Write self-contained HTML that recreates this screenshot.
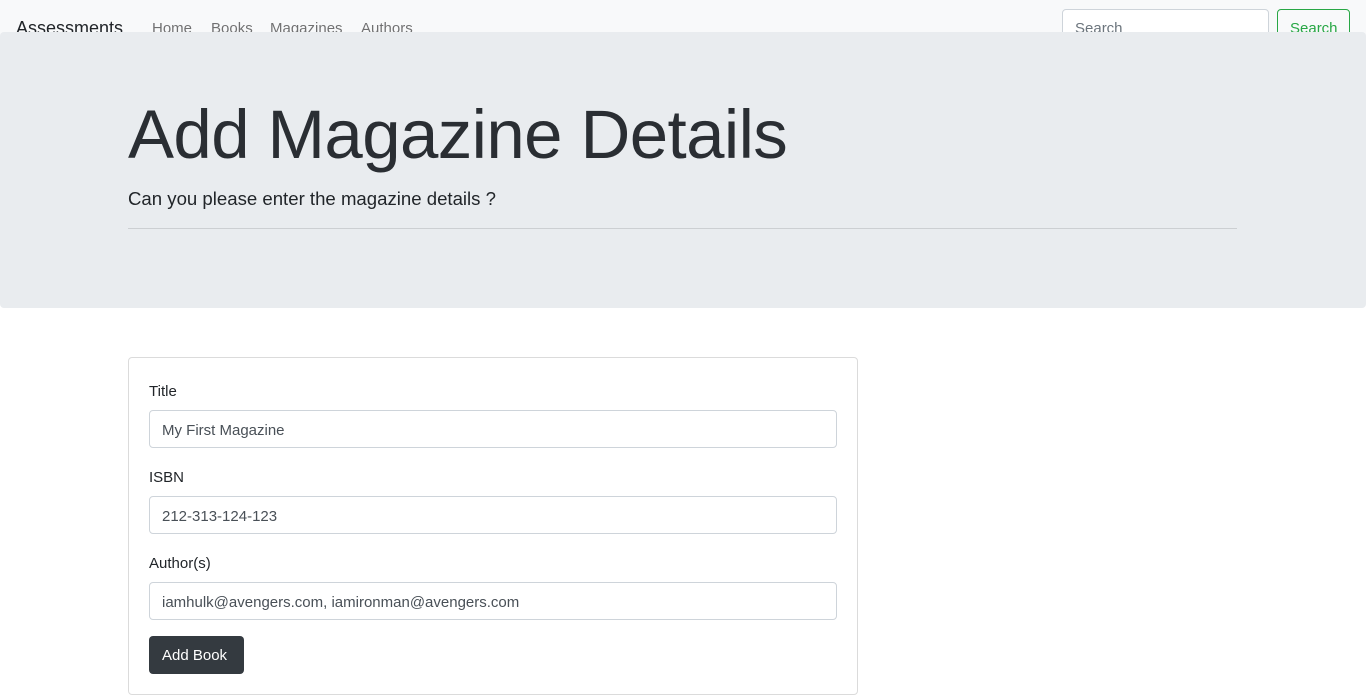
<!DOCTYPE html>
<html><head><style>
*{box-sizing:border-box}
body{margin:0;font-family:"Liberation Sans",sans-serif;color:#212529;background:#fff;width:1366px;height:695px;overflow:hidden;position:relative}
.nav{position:absolute;top:0;left:0;width:1366px;height:56px;background:#f8f9fa}
.brand{position:absolute;left:16px;top:18px;font-size:18px;color:#212529}
.links{position:absolute;top:20px;font-size:15px;color:rgba(0,0,0,.55)}
.sinput{position:absolute;left:1062px;top:9px;width:207px;height:38px;border:1px solid #ced4da;border-radius:4px;background:#fff;padding:10px 12px;font-size:15px;color:#6c757d}
.sbtn{position:absolute;left:1277px;top:9px;width:73px;height:38px;border:1px solid #28a745;border-radius:4px;color:#28a745;font-size:15px;padding:10px 12px}
.jumbo{position:absolute;top:32px;left:0;width:1366px;height:276px;background:#e9ecef;border-radius:4px}
h1{position:absolute;left:128px;top:62px;margin:0;font-size:69px;font-weight:300;line-height:1.2;letter-spacing:-.6px;color:#2a2e33}
.lead{position:absolute;left:128px;top:156px;font-size:18.6px;font-weight:300}
.hr{position:absolute;left:128px;top:196px;width:1109px;border-top:1px solid rgba(0,0,0,.12)}
.card{position:absolute;left:128px;top:357px;width:730px;height:338px;border:1px solid rgba(0,0,0,.14);border-radius:4px}
label{position:absolute;left:20px;font-size:15px}
.inp{position:absolute;left:20px;width:688px;height:38px;border:1px solid #ced4da;border-radius:4px;padding:11px 12px;font-size:15px;color:#495057}
.btn{position:absolute;left:20px;top:278px;width:95px;height:38px;background:#343a40;color:#fff;border-radius:4px;font-size:15px;padding:11px 13px}
</style></head><body>
<div class="nav"><div class="brand">Assessments</div>
<span class="links" style="left:152px">Home</span><span class="links" style="left:211px">Books</span><span class="links" style="left:270px">Magazines</span><span class="links" style="left:361px">Authors</span>
<div class="sinput">Search</div><div class="sbtn">Search</div></div>
<div class="jumbo">
<h1>Add Magazine Details</h1>
<div class="lead">Can you please enter the magazine details ?</div>
<div class="hr"></div>
</div>
<div class="card">
<label style="top:25px">Title</label>
<div class="inp" style="top:52px">My First Magazine</div>
<label style="top:111px">ISBN</label>
<div class="inp" style="top:138px">212-313-124-123</div>
<label style="top:197px">Author(s)</label>
<div class="inp" style="top:224px">iamhulk@avengers.com, iamironman@avengers.com</div>
<div class="btn">Add Book</div>
</div>
</body></html>
